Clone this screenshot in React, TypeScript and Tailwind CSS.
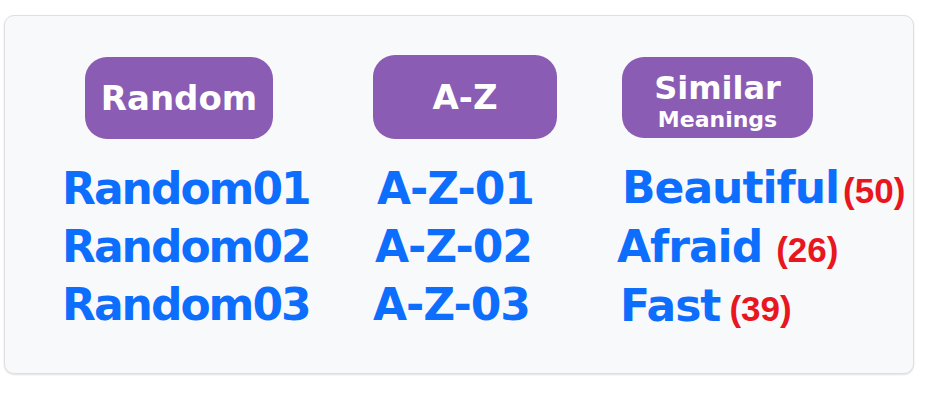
import React from 'react';

const blue = 'text-[#0d6efd]';

const words = [
  { word: 'Beautiful', count: 50, gap: 'ml-[4px]', pad: 'pl-[5px]' },
  { word: 'Afraid', count: 26, gap: 'ml-[14px]', pad: 'pl-0' },
  { word: 'Fast', count: 39, gap: 'ml-[9px]', pad: 'pl-[3px]' },
];

const App: React.FC = () => {
  return (
    <div className="w-[934px] h-[400px] bg-white pt-[15px] pl-[4px]">
      <div className="w-[910px] h-[359px] bg-[#f8f9fa] border border-[#dddfe2] rounded-[10px] shadow-[0_1px_2px_rgba(0,0,0,0.12)] pl-[57px] pt-[41px]">
        <div className="grid grid-cols-[311px_244px_1fr] font-['DejaVu_Sans',sans-serif] font-bold">
          {/* Random */}
          <div>
            <button className="ml-[23px] w-[188px] h-[82px] rounded-[22px] bg-[#8a5cb4] text-white text-[34px] leading-none">
              Random
            </button>
            <div className={`mt-[21px] ${blue} text-[44px] leading-[58px] tracking-[-2px]`}>
              <div>Random01</div>
              <div>Random02</div>
              <div>Random03</div>
            </div>
          </div>

          {/* A-Z */}
          <div>
            <button className="-mt-[2px] w-[184px] h-[84px] rounded-[22px] bg-[#8a5cb4] text-white text-[34px] leading-none">
              A-Z
            </button>
            <div className={`mt-[21px] ${blue} text-[44px] leading-[58px] tracking-[-1px]`}>
              <div className="pl-[4px]">A-Z-01</div>
              <div className="pl-[2px]">A-Z-02</div>
              <div>A-Z-03</div>
            </div>
          </div>

          {/* Similar meanings */}
          <div>
            <button className="ml-[5px] w-[191px] h-[81px] rounded-[22px] bg-[#8a5cb4] text-white flex flex-col items-center justify-start pt-[14px]">
              <span className="text-[32px] leading-[34px]">Similar</span>
              <span className="mt-[3px] text-[22px] leading-[24px]">Meanings</span>
            </button>
            <div className={`mt-[22px] ${blue} text-[44px] leading-[56px] tracking-[-1px]`}>
              {words.map((w) => (
                <div key={w.word} className={`flex items-baseline ${w.pad}`}>
                  <span>{w.word}</span>
                  <span className={`${w.gap} text-[#e8161e] text-[35px] tracking-normal font-['Liberation_Sans',sans-serif]`}>
                    ({w.count})
                  </span>
                </div>
              ))}
            </div>
          </div>
        </div>
      </div>
    </div>
  );
};

export default App;
